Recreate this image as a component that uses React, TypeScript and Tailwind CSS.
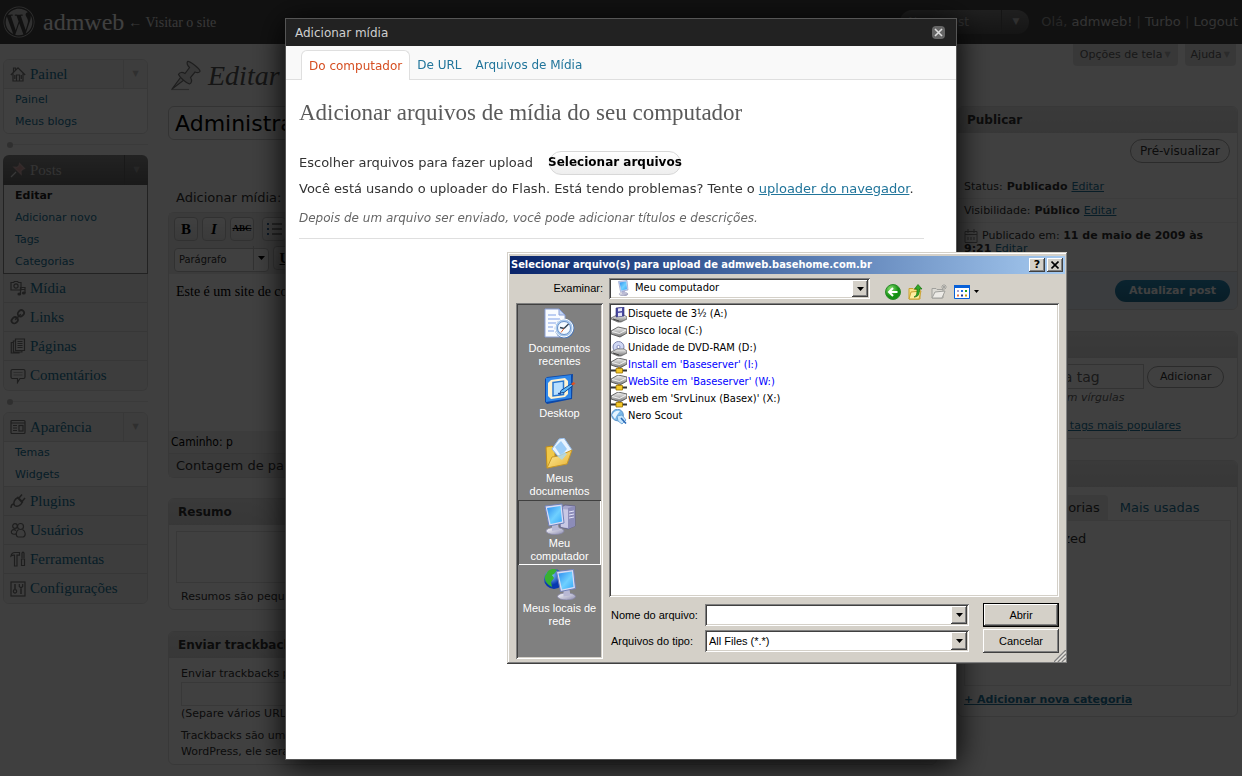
import type { ReactNode } from "react";
import { FaWordpress } from "react-icons/fa";

const serif = "font-['Liberation_Serif',serif]";
const sans = "font-['DejaVu_Sans',sans-serif]";
const tahoma = "font-['DejaVu_Sans_Condensed','DejaVu_Sans',sans-serif]";
const msSans = "font-['Liberation_Sans',sans-serif]";

const raised = "bg-[#d4d0c8] shadow-[inset_-1px_-1px_#404040,inset_1px_1px_#fff,inset_-2px_-2px_#808080]";
const sunken = "shadow-[inset_1px_1px_#808080,inset_-1px_-1px_#fff,inset_2px_2px_#404040,inset_-2px_-2px_#d4d0c8]";

/* ---------- admin menu icons ---------- */

function Glyph({ children }: { children: ReactNode }) {
    return (
        <svg viewBox="0 0 16 16" className="h-4 w-4 shrink-0" fill="none" stroke="#777" strokeWidth="1.2">
            {children}
        </svg>
    );
}

const menuIcons: Record<string, ReactNode> = {
    Painel: <Glyph><path d="M.8 9 8 1.8 15.2 9M3 7.5V15h10V7.5M3.5 6V2h2v2.2M6.5 15V9h3v6M4.8 9v4M11.3 9v4" /></Glyph>,
    Posts: <Glyph><path d="M1 15l5-5" stroke="#ddd" /><path d="M9.5 1.5 14.5 6.5l-1.6.6-2 2 .2 3.2L4 5.2l3.2.2 2-2z" fill="#c99" stroke="#caa" /></Glyph>,
    "Mídia": <Glyph><path d="M1 2.5h2.5l1-1h3l1 1H11v7.5H1z" /><circle cx="6" cy="6" r="2.1" /><path d="M10.5 14V7.5h4.5V13M10.5 9.5H15" /><ellipse cx="9.3" cy="14" rx="1.3" ry="1" fill="#777" /><ellipse cx="13.8" cy="13" rx="1.3" ry="1" fill="#777" /></Glyph>,
    Links: <Glyph><rect x="7.6" y="1.6" width="6.6" height="5.4" rx="2.7" transform="rotate(-45 10.9 4.3)" strokeWidth="1.8" /><rect x="1.4" y="8.6" width="6.6" height="5.4" rx="2.7" transform="rotate(-45 4.7 11.3)" strokeWidth="1.8" /><path d="M5.2 10.8l5.6-5.6" strokeWidth="1.6" /></Glyph>,
    "Páginas": <Glyph><path d="M5.5 1h9v11.5h-9zM5.5 3H3.4v11h8.5v-1.5M3.4 4.500H1.300V15H9v-1M7.500 3.500h5M7.500 5.500h5M7.500 7.500h5M7.500 9.500h5" /></Glyph>,
    "Comentários": <Glyph><path d="M2.500 1.500h11a1.500 1.500 0 0 1 1.500 1.500v6a1.500 1.500 0 0 1-1.500 1.500H10l-2.500 4v-4h-5A1.500 1.500 0 0 1 1 9V3a1.500 1.500 0 0 1 1.500-1.500z" /><path d="M3.500 4.500h9M3.500 7h9" stroke="#aaa" strokeWidth=".8" /></Glyph>,
    "Aparência": <Glyph><rect x="1" y="1.500" width="14" height="13" rx="1" /><path d="M1 4h14M3 6.500h4M3 9h4M3 11.500h4" /><rect x="9" y="6.500" width="4" height="5.500" /></Glyph>,
    Plugins: <Glyph><path d="M1 15c0-3 1-4 3-4M4.500 12.500C2.500 9.500 5 6 8 4.500l4.500 4.500C11 12 7.500 14.500 4.500 12.500zM9 5l3-3.500M12 8.500 15 5M7 4l5.500 6" strokeWidth="1.500" /></Glyph>,
    "Usuários": <Glyph><circle cx="5" cy="4" r="2.300" /><path d="M6 8.500C3 6 .8 9 1.500 11c.8 1.500 3.500 1.500 5 .8" /><circle cx="10.500" cy="4.500" r="3" /><path d="M8.500 7.500c-3 2-2.800 7-.5 7.500h5c3-.5 3-5.500-.5-7.500" /></Glyph>,
    Ferramentas: <Glyph><path d="M1 5c.5-3 2-3.500 4-3.500h4.500v2.700H7V15H4.500V4.200C3 4 2 4.200 1 5z" /><path d="M12 7V2l1-1 1 1v5M11.500 8h3v6.500h-3z" /></Glyph>,
    "Configurações": <Glyph><rect x="1" y="1" width="14" height="14" /><path d="M5 3v5M5 12.500v.5M11 7.500V13" strokeWidth="1.500" /><circle cx="5" cy="10.300" r="1.700" /><path d="M9.300 3v2.500l1.700 1.500 1.700-1.500V3" /></Glyph>,
};

/* ---------- admin page behind the dialogs ---------- */

function MenuHead({ name, active }: { name: string; active?: boolean }) {
    return (
        <div className={active
            ? "flex h-[30px] items-center rounded-t-md bg-linear-to-b from-[#8a8a8a] to-[#666] pl-[7px] text-[#ccc]"
            : "flex h-[29px] items-center border-b border-[#dfdfdf] bg-[#f1f1f1] pl-1.5 text-[#21759b]"}>
            {menuIcons[name]}
            <a href="#" className={`${serif} ml-1 flex-1 text-[15px]`}>{name}</a>
            <span className={`flex h-full w-6 items-center justify-center border-l text-[8px] ${active ? "border-[#666] text-[#999]" : "border-[#dfdfdf] text-[#bbb]"}`}>▼</span>
        </div>
    );
}

function MenuRow({ name }: { name: string }) {
    return (
        <div className="flex h-[29px] items-center border-b border-[#dcdcdc] bg-[#f1f1f1] pl-1.5 last:border-0">
            {menuIcons[name]}
            <a href="#" className={`${serif} ml-1 text-[15px] text-[#21759b]`}>{name}</a>
        </div>
    );
}

function SubItems({ items, current }: { items: string[]; current?: string }) {
    return (
        <ul className="bg-white text-[11px]">
            {items.map((item) => (
                <li key={item} className="flex h-[22px] items-center pt-px pl-[11px]">
                    <a href="#" className={item === current ? "font-bold text-[#222]" : "text-[#21759b]"}>{item}</a>
                </li>
            ))}
        </ul>
    );
}

function Separator() {
    return (
        <div className="flex h-[21px] items-center">
            <span className="ml-1 h-1.5 w-1.5 rounded-full bg-[#bbb]" />
            <span className="h-px flex-1 bg-[#e6e6e6]" />
        </div>
    );
}

function Sidebar() {
    return (
        <nav className="w-[145px] shrink-0 pt-[15px]">
            <div className="overflow-hidden rounded-md border border-[#dfdfdf]">
                <MenuHead name="Painel" />
                <SubItems items={["Painel", "Meus blogs"]} />
            </div>
            <Separator />
            <MenuHead name="Posts" active />
            <div className="border border-t-0 border-[#888]">
                <SubItems items={["Editar", "Adicionar novo", "Tags", "Categorias"]} current="Editar" />
            </div>
            <div className="overflow-hidden rounded-b-md border border-t-0 border-[#dfdfdf]">
                {["Mídia", "Links", "Páginas", "Comentários"].map((n) => <MenuRow key={n} name={n} />)}
            </div>
            <Separator />
            <div className="overflow-hidden rounded-md border border-[#dfdfdf]">
                <MenuHead name="Aparência" />
                <SubItems items={["Temas", "Widgets"]} />
                <div className="border-t border-[#dfdfdf]">
                    {["Plugins", "Usuários", "Ferramentas", "Configurações"].map((n) => <MenuRow key={n} name={n} />)}
                </div>
            </div>
        </nav>
    );
}

function Header() {
    return (
        <header className="flex h-11 items-center bg-[#464646] pr-1 pl-[3px] text-white">
            <FaWordpress className="h-8 w-8 text-[#c4c4c4]" />
            <h1 className={`${serif} ml-2 text-[24px]`}>admweb</h1>
            <a href="#" className={`${serif} ml-1 text-[14px] text-[#ddd]`}>← Visitar o site</a>
            <div className="ml-auto flex h-6 w-[129px] items-center rounded-full bg-linear-to-b from-[#7c7c7c] to-[#545454] text-[12px] text-[#bbb]">
                <a href="#" className="flex-1 pl-2">Novo post</a>
                <span className="flex h-full w-7 items-center justify-center border-l border-[#555] text-[9px]">▼</span>
            </div>
            <p className="ml-3 text-[13px] text-[#999]">
                Olá, <a href="#" className="text-[#ccc]">admweb!</a> | <a href="#" className="text-[#ccc]">Turbo</a> | <a href="#" className="text-[#ccc]">Logout</a>
            </p>
        </header>
    );
}

function Box({ title, children }: { title: string; children: ReactNode }) {
    return (
        <section className="mb-[21px] overflow-hidden rounded-md border border-[#dfdfdf] bg-white">
            <h3 className="flex h-[26px] items-center bg-linear-to-b from-[#e6e6e6] to-[#dcdcdc] pl-[9px] text-[12px] font-bold text-[#333]">{title}</h3>
            {children}
        </section>
    );
}

const tool = "flex h-6 w-6 items-center justify-center rounded-sm border border-[#c4c4c4] bg-linear-to-b from-white to-[#e6e6e6] font-['Liberation_Serif',serif] text-[15px] font-bold text-black";

function Editor() {
    return (
        <div className="rounded-md border border-[#dfdfdf]">
            <div className="flex flex-col gap-[5px] bg-[#e9e9e9] px-[5px] py-1">
                <div className="flex gap-1">
                    <button className={tool}>B</button>
                    <button className={`${tool} italic`}>I</button>
                    <button className={tool}><s className="text-[9px]">ABC</s></button>
                    <button className={`${tool} ml-1`} aria-label="Lista">
                        <svg viewBox="0 0 16 16" className="h-4 w-4"><path d="M6 3h10M6 8h10M6 13h10" stroke="#333" /><path d="M1 2h2v2H1zM1 7h2v2H1zM1 12h2v2H1z" fill="#369" /></svg>
                    </button>
                </div>
                <div className="flex gap-1">
                    <div className="relative h-6 w-[95px]">
                        <select aria-label="Formato" className={`${tahoma} h-full w-full appearance-none rounded-sm border border-[#c4c4c4] bg-white pl-1 text-[11px]`}>
                            <option>Parágrafo</option>
                        </select>
                        <span className="pointer-events-none absolute top-0 right-0 flex h-full w-4 items-center justify-center border-l border-[#c4c4c4]">
                            <svg viewBox="0 0 7 4" className="h-1 w-[7px]"><path d="M0 0h7L3.500 4z" /></svg>
                        </span>
                    </div>
                    <button className={tool}><u>U</u></button>
                </div>
            </div>
            <div className={`${serif} h-[157px] bg-white px-[7px] pt-2 text-[14px] leading-5 text-black`}>Este é um site de conteúdo</div>
            <p className={`${tahoma} flex h-[22px] items-center bg-[#efefef] pl-0.5 text-[12px] text-black`}>Caminho: p</p>
            <p className="flex h-6 items-center border-t border-[#dfdfdf] bg-[#e9e9e9] pl-[7px] text-[13px]">Contagem de palavras:</p>
        </div>
    );
}

function PostForm() {
    return (
        <div className="min-w-0 flex-1">
            <input aria-label="Título" defaultValue="Administração" className="block h-[34px] w-full rounded-md border border-[#ccc] bg-white px-1.5 text-[22px] text-black" />
            <p className="mt-[46px] mb-0.5 flex h-6 items-center pl-2 text-[13px]">Adicionar mídia:</p>
            <Editor />
            <div className="h-5" />
            <Box title="Resumo">
                <textarea aria-label="Resumo" className="mx-[7px] mt-1.5 block h-[52px] w-[500px] resize-none border border-[#dfdfdf]" />
                <p className="px-3 pt-1.5 pb-1 text-[11px] leading-4">Resumos são pequenos</p>
            </Box>
            <Box title="Enviar trackbacks">
                <div className="px-3 pt-2 pb-1 text-[11px] leading-4">
                    <label htmlFor="trackback" className="block">Enviar trackbacks para:</label>
                    <input id="trackback" className="block h-6 w-full border border-[#dfdfdf]" />
                    <p>(Separe vários URLs)</p>
                    <p className="mt-1.5">Trackbacks são uma<br />WordPress, ele será</p>
                </div>
            </Box>
        </div>
    );
}

const pill = "rounded-full border border-[#aaa] bg-white text-[#333]";

function SideBoxes() {
    return (
        <div className="w-[281px] shrink-0 text-[11px]">
            <Box title="Publicar">
                <div className="mt-1.5 flex h-9 items-start justify-end px-[7px]">
                    <button className={`${pill} h-6 px-[9px] text-[12px]`}>Pré-visualizar</button>
                </div>
                <p className="flex h-6 items-center gap-1 border-b border-[#eee] pt-px pl-1.5">Status: <b>Publicado</b> <a href="#" className="text-[#21759b] underline">Editar</a></p>
                <p className="flex h-6 items-center gap-1 border-b border-[#eee] pt-px pl-1.5">Visibilidade: <b>Público</b> <a href="#" className="text-[#21759b] underline">Editar</a></p>
                <p className="h-12 px-1.5 pt-1.5 leading-[13px]">
                    <svg viewBox="0 0 14 14" className="-my-2 mr-1 inline h-3.5 w-3.5 align-middle" fill="none" stroke="#888"><path d="M1 2.500h12v11H1zM1 5.500h12M4 0v4M10 0v4M4 8v3M7 8v3M10 8v3" /></svg>
                    Publicado em: <b>11 de maio de 2009 às 9:21</b> <a href="#" className="text-[#21759b] underline">Editar</a>
                </p>
                <div className="flex h-[38px] items-center justify-end border-t border-[#dfdfdf] bg-[#eaf2fa] px-[7px]">
                    <button className="flex h-[22px] items-center rounded-full bg-linear-to-b from-[#298cba] to-[#21759b] px-3.5 pt-px text-[11px] font-bold text-white">Atualizar post</button>
                </div>
            </Box>
            <Box title="Tags">
                <div className="px-1.5 pt-1.5 pb-1">
                    <div className="flex items-center gap-[3px]">
                        <input aria-label="Tag" defaultValue="Adicionar nova tag" className="h-[25px] w-[180px] border border-[#ccc] px-[3px] text-[14px] text-[#666]" />
                        <button className={`${pill} flex h-[22px] items-center px-3 pt-px`}>Adicionar</button>
                    </div>
                    <p className="pt-px leading-4 text-[#666] italic">Separar as tags com vírgulas</p>
                    <a href="#" className="mt-3 block leading-4 text-[#21759b] underline">Escolher dentre as tags mais populares</a>
                </div>
            </Box>
            <Box title="Categorias">
                <div className="px-1.5 pt-2 pb-2">
                    <div className="flex h-[25px] text-[13px]">
                        <a href="#" className="flex items-center rounded-t-sm bg-[#e9e9e9] px-2 text-[#333]">Todas as categorias</a>
                        <a href="#" className="ml-1 flex items-center px-2 text-[#21759b]">Mais usadas</a>
                    </div>
                    <div className="h-[166px] border border-[#e6e6e6] px-2.5 pt-2.5">
                        <label className="flex items-center gap-1 text-[13px] leading-4"><input type="checkbox" /> Uncategorized</label>
                    </div>
                    <a href="#" className="mt-1.5 block leading-4 font-bold text-[#21759b] underline">+ Adicionar nova categoria</a>
                </div>
            </Box>
        </div>
    );
}

function AdminPage() {
    return (
        <div className={`${sans} h-screen overflow-hidden bg-[#f9f9f9] text-[#333]`}>
            <Header />
            <div className="flex gap-5 pr-1 pl-[3px]">
                <Sidebar />
                <main className="min-w-0 flex-1">
                    <div className="flex h-[62px] items-start">
                        <svg viewBox="0 0 32 32" className="mt-4 ml-0.5 h-8 w-8" fill="#ddd" stroke="#777" strokeWidth="1.200">
                            <path d="M1 29.500h18" stroke="#aaa" /><path d="M2 29 11 17l3 3z" />
                            <path d="M17.500 1.500c2-.8 13 7.500 12.500 10-1.500 2-4 1-5 .5l-4.500 5.500c2 3 1 6-1 6.500-3.500-1-9.500-6.500-11-9.500 1-2.500 4-2.500 6.500-1l4.500-6c-1.500-1.500-3-4-2-6z" />
                        </svg>
                        <h2 className={`${serif} mt-4 ml-1.5 flex-1 text-[28px] leading-8 text-[#555] italic`}>Editar</h2>
                        <div className="flex gap-[7px] pr-0.5 text-[11px] text-[#606060]">
                            <button className="flex h-[22px] items-center gap-0.5 rounded-b-sm bg-[#e0e0e0] px-[7px]">Opções de tela <span className="text-[8px] text-[#aaa]">▼</span></button>
                            <button className="flex h-[22px] items-center gap-0.5 rounded-b-sm bg-[#e0e0e0] px-1.5">Ajuda <span className="text-[8px] text-[#aaa]">▼</span></button>
                        </div>
                    </div>
                    <div className="flex gap-5">
                        <PostForm />
                        <SideBoxes />
                    </div>
                </main>
            </div>
        </div>
    );
}

/* ---------- media box ---------- */

function MediaModal() {
    return (
        <div className={`${sans} flex h-full w-[672px] flex-col border border-[#555] bg-white text-[13px] text-[#333] shadow-[0_4px_30px_#000]`}>
            <div className="flex h-[27px] shrink-0 items-center justify-between bg-[#222] pr-[11px] pl-[9px] text-[12px] text-[#cfcfcf]">
                <span>Adicionar mídia</span>
                <button aria-label="Fechar" className="flex h-[13px] w-[13px] items-center justify-center rounded-sm bg-[#666]">
                    <svg viewBox="0 0 9 9" className="h-[9px] w-[9px]"><path d="M1 1l7 7M8 1 1 8" stroke="#ddd" strokeWidth="1.600" /></svg>
                </button>
            </div>
            <div className="flex h-[34px] shrink-0 items-end border-b border-[#dfdfdf] bg-[#f9f9f9] pl-[15px] text-[12px] text-[#21759b]">
                <a href="#" className="-mb-px flex h-[30px] items-center rounded-t-md border border-b-0 border-[#dfdfdf] bg-white px-[7px] text-[#d54e21]">Do computador</a>
                <a href="#" className="flex h-[29px] items-center px-[7px]">De URL</a>
                <a href="#" className="flex h-[29px] items-center px-[7px]">Arquivos de Mídia</a>
            </div>
            <div className="flex-1 pr-8 pl-[13px]">
                <h3 className={`${serif} mt-[18px] text-[23px] leading-[30px] text-[#5a5a5a]`}>Adicionar arquivos de mídia do seu computador</h3>
                <div className="mt-[23px] flex h-6 items-center">
                    <span>Escolher arquivos para fazer upload</span>
                    <button className="ml-4 flex h-6 w-[132px] justify-center rounded-full border border-[#d8d8d8] bg-linear-to-b from-white to-[#eee] text-[12px] leading-5 font-bold whitespace-nowrap text-black">
                        Selecionar arquivos
                    </button>
                </div>
                <p className="mt-1 leading-5">Você está usando o uploader do Flash. Está tendo problemas? Tente o <a href="#" className="text-[#21759b] underline">uploader do navegador</a>.</p>
                <p className="mt-[9px] border-b border-[#dfdfdf] pb-2.5 text-[12px] leading-5 text-[#666] italic">Depois de um arquivo ser enviado, você pode adicionar títulos e descrições.</p>
            </div>
        </div>
    );
}

/* ---------- file picker icons ---------- */

function Gradients() {
    return (
        <svg className="absolute h-0 w-0" aria-hidden="true">
            <defs>
                <linearGradient id="screen" x1="0" y1="0" x2="1" y2="1"><stop stopColor="#2c8cf0" /><stop offset=".55" stopColor="#6fd0ff" /><stop offset="1" stopColor="#38a8f8" /></linearGradient>
                <linearGradient id="metal" x1="0" y1="0" x2="1" y2="1"><stop stopColor="#fff" /><stop offset="1" stopColor="#8c8cb0" /></linearGradient>
                <linearGradient id="disk" x1="0" y1="0" x2="0" y2="1"><stop stopColor="#f4f4f4" /><stop offset="1" stopColor="#777" /></linearGradient>
                <linearGradient id="folder" x1="0" y1="0" x2="1" y2="1"><stop stopColor="#fff0a0" /><stop offset="1" stopColor="#e8b030" /></linearGradient>
                <radialGradient id="globe" cx=".35" cy=".3"><stop stopColor="#8cd0ff" /><stop offset="1" stopColor="#0838b0" /></radialGradient>
                <radialGradient id="go" cx=".35" cy=".3"><stop stopColor="#8ae070" /><stop offset="1" stopColor="#149014" /></radialGradient>
            </defs>
        </svg>
    );
}

function RecentIcon() {
    return (
        <svg viewBox="0 0 32 32" className="h-8 w-8">
            <path d="M1 1h14l6 6v22H1z" fill="#f8fbff" stroke="#8aa0d8" />
            <path d="M15 1v6h6z" fill="#c4d6f4" stroke="#8aa0d8" />
            <path d="M4 7h8M4 11h12M4 15h8M4 19h5M4 23h6" stroke="#a8c0f0" strokeWidth="1.500" />
            <circle cx="20.500" cy="20.500" r="9.800" fill="#4c78b8" /><circle cx="20" cy="20" r="9" fill="#a8c8ec" stroke="#fff" />
            <circle cx="20" cy="20" r="6.500" fill="#f4faff" stroke="#6890c8" />
            <path d="M20 20.500 24.500 16M20 20.500l-4-1" stroke="#345" strokeWidth="1.400" /><path d="m20 20.500-3 4" stroke="#e06030" />
        </svg>
    );
}

function DesktopIcon() {
    return (
        <svg viewBox="0 0 32 32" className="h-8 w-8">
            <path d="M3 4 29 1l-1 25-25 5-2-2V6z" fill="#0c48a8" /><path d="M2 5 27 2v23L2 29z" fill="#2f86e8" />
            <path d="m7 7 14-2 3 3v13l-3 3-14 2-3-3V10z" fill="#fff3d0" />
            <path d="M9 9.500 19.500 8v13.500L9 23z" fill="#b8e0ff" stroke="#2878d0" strokeWidth="1.500" />
            <path d="m16 20 1-2.500L27 11l2 1.500-9 7z" fill="#5cb8f8" stroke="#134890" /><path d="m27 11 2.500-2 2 1.500-2.500 2z" fill="#e05020" /><path d="M14 20.500l3 .5" stroke="#1848a0" strokeWidth="1.500" />
        </svg>
    );
}

function DocumentsIcon() {
    return (
        <svg viewBox="0 0 32 32" className="h-8 w-8">
            <path d="M2 9l6-1 3 3v17L3 30z" fill="#f0c848" stroke="#c08c18" />
            <path d="M8 11 15 1l5-1 8 12-9 12z" fill="#e8f4ff" stroke="#90b8e8" /><path d="M11 9l6-6 6 8-6 7z" fill="#9ccdf8" />
            <path d="M8 19l7-1 13-6-5 14-20 4z" fill="url(#folder)" stroke="#c89828" /><path d="m13 18 7-4 3 2-5 6z" fill="#a8d8f8" opacity=".8" />
        </svg>
    );
}

function Screen() {
    return (
        <>
            <ellipse cx="11" cy="28" rx="9" ry="3.500" fill="url(#metal)" stroke="#8888a8" strokeWidth=".8" />
            <path d="m8 20 6 1 1 6-7 1z" fill="#b8b8d4" />
            <path d="M1 3 18 1l2 19-15 3z" fill="#d8dcf4" stroke="#7080b8" /><path d="m3 5 13.500-2L18 18.500 6.500 21z" fill="url(#screen)" />
        </>
    );
}

function ComputerIcon() {
    return (
        <svg viewBox="0 0 32 32" className="h-8 w-8">
            <path d="m16 5 5-3 10 1v20l-7 3-8-2z" fill="#a8a8cc" stroke="#60608c" strokeWidth=".8" /><path d="m24 5 7-2v20l-7 3z" fill="#8c8cb8" />
            <path d="m17 6 7 .500V25l-7-1z" fill="#c8c8e4" /><path d="M25 9l5-1M25 12l5-1M25 15l5-1" stroke="#e4e4f8" />
            <Screen />
        </svg>
    );
}

function NetworkIcon() {
    return (
        <svg viewBox="0 0 32 32" className="h-8 w-8">
            <circle cx="10" cy="11" r="10" fill="url(#globe)" />
            <path d="M4 3c4-3 7-2 9-1l-3 4-2 1 2 3-3 4 1 5C2 16 0 11 1 8z" fill="#38b030" /><path d="M14 3l4 3-3 3z" fill="#58c840" />
            <g transform="translate(11.500 .500)"><Screen /></g>
        </svg>
    );
}

function DriveIcon({ kind }: { kind: string }) {
    if (kind === "nero") {
        return (
            <svg viewBox="0 0 16 16" className="h-4 w-4">
                <circle cx="6.500" cy="6" r="5.800" fill="#78b8e8" stroke="#5890c8" /><path d="M1 6c2-4 5-5 8-4l-3 4-2 4z" fill="#e4f4ff" />
                <path d="m6 7 5-1 4 5-4 4-4-3z" fill="#c4e4fa" stroke="#5898d0" strokeWidth=".8" /><path d="m10 9 5 5.500" stroke="#2868b8" strokeWidth="1.600" />
            </svg>
        );
    }
    return (
        <svg viewBox="0 0 16 16" className="h-4 w-4">
            {kind === "dvd" && <><circle cx="7.500" cy="6" r="5.500" fill="#d0d8f4" stroke="#8088b0" /><circle cx="7.500" cy="6" r="1.600" fill="#fff" stroke="#8890c0" /></>}
            {kind === "dvd" || kind === "floppy"
                ? <><path d="m0 11 6-3h7l3 2v2l-6 3H7l-7-3z" fill="url(#disk)" stroke="#555" strokeWidth=".7" /><path d="m2 12 6 2" stroke="#444" /></>
                : <><path d={kind === "net" ? "m0 4 7-4 9 2v4l-7 4-9-3z" : "m0 7 7-4 9 2v4l-7 4-9-3z"} fill="url(#disk)" stroke="#444" strokeWidth=".8" /><path d={kind === "net" ? "m1 4.500 7.500 2L15 3" : "m1 7.500 7.500 2L15 6"} stroke="#fff" strokeWidth=".8" fill="none" /></>}
            {kind === "floppy" && <><path d="m5 1 8-1v9l-8 1z" fill="#4848a0" stroke="#303070" strokeWidth=".6" /><path d="M7 1.500 11 1v3l-4 .500zM7 6l4-.500v3.500L7 9.500z" fill="#e4e4f8" /></>}
            {kind === "net" && <><path d="M0 12.500h5M11 12.500h5" stroke="#333" strokeWidth="1.800" /><path d="M8 9v3" stroke="#b88810" strokeWidth="1.500" /><path d="M5 10.500h6.500v4.500H5z" fill="#f4c828" stroke="#987000" strokeWidth=".8" /></>}
        </svg>
    );
}

const drives = [
    { name: "Disquete de 3½ (A:)", kind: "floppy" },
    { name: "Disco local (C:)", kind: "disk" },
    { name: "Unidade de DVD-RAM (D:)", kind: "dvd" },
    { name: "Install em 'Baseserver' (I:)", kind: "net", blue: true },
    { name: "WebSite em 'Baseserver' (W:)", kind: "net", blue: true },
    { name: "web em 'SrvLinux (Basex)' (X:)", kind: "net" },
    { name: "Nero Scout", kind: "nero" },
];

const places = [
    { name: "Documentos recentes", icon: <RecentIcon /> },
    { name: "Desktop", icon: <DesktopIcon /> },
    { name: "Meus documentos", icon: <DocumentsIcon /> },
    { name: "Meu computador", icon: <ComputerIcon />, active: true },
    { name: "Meus locais de rede", icon: <NetworkIcon /> },
];

/* ---------- file picker ---------- */

function DropArrow() {
    return (
        <span className={`${raised} pointer-events-none absolute top-0.5 right-0.5 bottom-0.5 flex w-4 items-center justify-center`}>
            <svg viewBox="0 0 7 4" className="h-1 w-[7px]"><path d="M0 0h7L3.500 4z" /></svg>
        </span>
    );
}

function FilePicker() {
    return (
        <div role="dialog" aria-label="Selecionar arquivo(s)" className={`${msSans} absolute top-[252px] left-[507px] w-[561px] bg-[#d4d0c8] px-[3px] pt-1 pb-[5px] text-[11px] text-black shadow-[inset_-1px_-1px_#404040,inset_1px_1px_#d4d0c8,inset_-2px_-2px_#808080,inset_2px_2px_#fff]`}>
            <Gradients />
            <div className="flex h-[18px] items-center gap-0.5 bg-linear-to-r from-[#0a246a] to-[#a6caf0] pr-0.5 pl-px">
                <h2 className={`${tahoma} flex-1 text-[11px] font-bold whitespace-nowrap text-white`}>Selecionar arquivo(s) para upload de admweb.basehome.com.br</h2>
                <button className={`${raised} ${sans} h-3.5 w-4 text-[11px] leading-3.5 font-bold`}>?</button>
                <button aria-label="Fechar" className={`${raised} flex h-3.5 w-4 items-center justify-center`}>
                    <svg viewBox="0 0 8 8" className="h-2 w-2"><path d="M.500.500l7 7M7.500.500l-7 7" stroke="#000" strokeWidth="1.600" /></svg>
                </button>
            </div>
            <div className="mt-1 flex h-[21px] items-center">
                <label htmlFor="lookin" className="w-[93px] shrink-0 text-right">Examinar:</label>
                <div className={`${sunken} relative ml-1.5 h-[21px] w-[261px] bg-white`}>
                    <svg viewBox="0 0 20 32" className="pointer-events-none absolute top-0.5 left-1.5 h-4 w-4"><Screen /></svg>
                    <select id="lookin" className={`${tahoma} h-full w-full appearance-none bg-transparent pl-[26px] text-[11px]`}><option>Meu computador</option></select>
                    <DropArrow />
                </div>
                <div className="mt-1.5 ml-[15px] flex items-center gap-[7px]">
                    <button aria-label="Voltar">
                        <svg viewBox="0 0 16 16" className="block h-4 w-4"><circle cx="8" cy="8" r="7.500" fill="url(#go)" stroke="#2a8a2a" /><path d="M12.500 8H4.500M8 4 4 8l4 4" stroke="#fff" strokeWidth="2" fill="none" /></svg>
                    </button>
                    <button aria-label="Um nível acima">
                        <svg viewBox="0 0 16 16" className="block h-4 w-4"><path d="M1 4.500h4l1 1h6V15H1z" fill="#f8e080" stroke="#c8a030" /><path d="m3 8 10-1-2 8H1z" fill="#ffeea0" stroke="#c8a030" /><path d="M6 13c3-1 3-4 3-8H6.500L10 .5 14 5h-2.500c0 5-1 8-5.500 8z" fill="#30a828" stroke="#187010" strokeWidth=".7" /></svg>
                    </button>
                    <button aria-label="Criar nova pasta">
                        <svg viewBox="0 0 16 16" className="block h-4 w-4"><path d="M1 4.500h4l1 1h6V14H1z" fill="#dcdad4" stroke="#a0a09c" /><path d="m4 8 10-1-3 7H1z" fill="#eceae6" stroke="#a0a09c" /><path d="M13 0v6M10 3h6M11 1l4 4M15 1l-4 4" stroke="#a4a4a0" /></svg>
                    </button>
                    <button aria-label="Modos de exibição" className="flex items-center gap-1">
                        <svg viewBox="0 0 16 16" className="block h-4 w-4"><path d="M.500 1.500h15v13H.500z" fill="#fff" stroke="#0860d8" /><path d="M0 1h16v3H0z" fill="#0860d8" /><path d="M3 6h2v2H3z" fill="#a8a0d0" /><path d="M7 6h2v2H7z" fill="#2070e0" /><path d="M11 6h2v2h-2z" fill="#20a020" /><path d="M3 10.500h2v2H3z" fill="#e87040" /><path d="M7 10.500h2v2H7z" fill="#203890" /><path d="M11 10.500h2v2h-2z" fill="#c8a000" /></svg>
                        <svg viewBox="0 0 5 3" className="h-[3px] w-[5px]"><path d="M0 0h5L2.500 3z" /></svg>
                    </button>
                </div>
            </div>
            <div className="mt-1 flex gap-1.5 pr-1.5 pl-1.5">
                <nav className={`${sunken} w-[87px] shrink-0 bg-[#808080] p-0.5 pb-[29px]`}>
                    {places.map((place) => (
                        <button key={place.name} className={`flex h-[65px] w-full flex-col items-center px-1 pt-[3px] text-center leading-[13px] text-white ${place.active ? "shadow-[inset_1px_1px_#404040,inset_-1px_-1px_#fff]" : ""}`}>
                            {place.icon}
                            <span className="mt-0.5">{place.name}</span>
                        </button>
                    ))}
                </nav>
                <div className="min-w-0 flex-1">
                    <ul className={`${sunken} ${tahoma} h-[294px] bg-white px-0.5 pt-[3px]`}>
                        {drives.map((drive) => (
                            <li key={drive.name} className={`flex h-[17px] items-center gap-px ${drive.blue ? "text-[#0000ff]" : ""}`}>
                                <DriveIcon kind={drive.kind} />{drive.name}
                            </li>
                        ))}
                    </ul>
                    <div className="mt-1.5 flex items-center">
                        <label htmlFor="filename" className="w-24 shrink-0 pl-0.5">Nome do arquivo:</label>
                        <div className="relative w-[264px]">
                            <input id="filename" className={`${sunken} block h-[22px] w-full bg-white px-1`} />
                            <DropArrow />
                        </div>
                        <button className="ml-auto h-6 w-[76px] border border-black bg-[#d4d0c8] shadow-[inset_-1px_-1px_#404040,inset_1px_1px_#fff,inset_-2px_-2px_#808080]">Abrir</button>
                    </div>
                    <div className="mt-0.5 flex items-center">
                        <label htmlFor="filetype" className="w-24 shrink-0 pl-0.5">Arquivos do tipo:</label>
                        <div className="relative w-[264px]">
                            <select id="filetype" className={`${sunken} block h-[22px] w-full appearance-none bg-white px-1`}><option>All Files (*.*)</option></select>
                            <DropArrow />
                        </div>
                        <button className={`${raised} ml-auto h-6 w-[76px]`}>Cancelar</button>
                    </div>
                </div>
            </div>
            <svg viewBox="0 0 12 12" className="absolute right-0.5 bottom-0.5 h-3 w-3"><path d="M0 12 12 0M4 12l8-8M8 12l4-4" stroke="#808080" strokeWidth="1.500" /><path d="M1.500 12 12 1.500M5.500 12 12 5.500M9.500 12 12 9.500" stroke="#fff" strokeWidth=".7" /></svg>
        </div>
    );
}

export default function App() {
    return (
        <>
            <AdminPage />
            <div className="fixed inset-0 flex justify-center bg-black/75 pt-[18px] pb-4">
                <MediaModal />
            </div>
            <FilePicker />
        </>
    );
}
